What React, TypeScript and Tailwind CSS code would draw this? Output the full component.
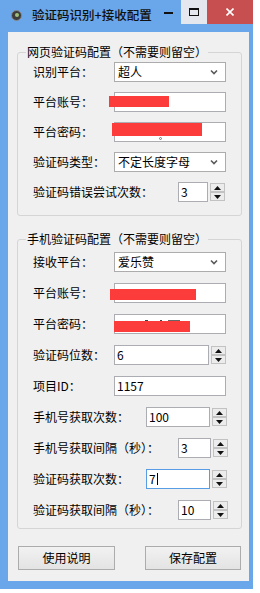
import React from "react";

const FONT = { fontFamily: '"Noto Sans CJK SC", "Noto Sans", sans-serif' };

function Chevron() {
  return (
    <svg width="8" height="6" viewBox="0 0 8 6" className="shrink-0">
      <path d="M1 1.5 L4 4.5 L7 1.5" fill="none" stroke="#5a5a5a" strokeWidth="1.6" />
    </svg>
  );
}

function Select({ value, w = "w-[112px]" }: { value: string; w?: string }) {
  return (
    <div className={`${w} h-[20px] bg-white border border-[#acacac] flex items-center pl-[3px] pr-[7px] justify-between`}>
      <span className="text-[12px] leading-[14px] text-black">{value}</span>
      <Chevron />
    </div>
  );
}

function TextBox({ value, w = "w-[112px]", children, focused }: { value?: string; w?: string; children?: React.ReactNode; focused?: boolean }) {
  return (
    <div className={`${w} h-[20px] relative bg-white border ${focused ? "border-[#569de5]" : "border-[#abadb3]"} flex items-center pl-[2px]`}>
      {value !== undefined && <span className="text-[12px] leading-[14px] text-black">{value}</span>}
      {focused && <span className="w-px h-[12px] bg-black ml-px" />}
      {children}
    </div>
  );
}

function SpinBtn({ up }: { up?: boolean }) {
  return (
    <div className="h-[9px] w-[15px] border border-[#c2c2c2] bg-[#ececec] flex items-center justify-center">
      <svg width="7" height="4" viewBox="0 0 7 4">
        {up ? <path d="M0 4 L3.5 0 L7 4 Z" fill="#111" /> : <path d="M0 0 L3.5 4 L7 0 Z" fill="#111" />}
      </svg>
    </div>
  );
}

function Spinner() {
  return (
    <div className="flex flex-col justify-between h-[20px] ml-[2px] py-px">
      <SpinBtn up />
      <SpinBtn />
    </div>
  );
}

function Row({ label, lw, children, className = "" }: { label: string; lw: string; children: React.ReactNode; className?: string }) {
  return (
    <div className={`flex items-center h-[20px] pl-[15px] ${className}`}>
      <span className={`${lw} shrink-0 text-[12px] leading-[14px] text-black`}>{label}</span>
      {children}
    </div>
  );
}

function Redact({ cls }: { cls: string }) {
  return <div className={`absolute bg-[#fc3b3b] ${cls}`} />;
}

export default function App() {
  return (
    <div className="w-[260px] h-[593px] bg-white" style={FONT}>
      <div className="w-[253px] h-[589px] bg-[#69a6ea] flex flex-col">
        {/* title bar */}
        <div className="h-[32px] flex items-start shrink-0">
          <div className="flex items-center h-[32px] pl-[11px] pb-[2px]">
            <div className="w-[11px] h-[11px] rounded-full bg-[#3d3d3d] border border-[#8a8a8a] flex items-center justify-center">
              <div className="w-[4px] h-[4px] rounded-full bg-[#9fc07a]" />
            </div>
            <span className="ml-[10px] text-[12.5px] leading-[14px] font-medium text-[#111]">验证码识别+接收配置</span>
          </div>
          <div className="flex-1" />
          <div className="flex h-[24px]">
            <div className="w-[25px] h-[24px] flex items-center justify-center pb-[1px]">
              <div className="w-[9px] h-[2px] bg-[#111] mt-[2px]" />
            </div>
            <div className="w-[26px] h-[24px] bg-[#e4e8ee] flex items-center justify-center">
              <div className="w-[10px] h-[8px] border border-[#111] border-t-2" />
            </div>
            <div className="w-[46px] h-[24px] bg-[#c74f4f] flex items-center justify-center">
              <svg width="8" height="8" viewBox="0 0 8 8">
                <path d="M0.5 0.5 L7.5 7.5 M7.5 0.5 L0.5 7.5" stroke="#fff" strokeWidth="1.6" />
              </svg>
            </div>
          </div>
        </div>

        {/* client */}
        <div className="ml-[8px] w-[241px] h-[549px] bg-[#f0f0f0] flex flex-col pt-[13px]">
          {/* group 1 */}
          <fieldset className="ml-[9px] w-[225px] border border-[#d5d5d5] rounded-[3px] pt-[3px] pb-[13px]">
            <legend className="ml-[8px] px-[1px] text-[12px] leading-[14px] text-black">网页验证码配置（不需要则留空）</legend>
            <div className="flex flex-col gap-[10px]">
              <Row label="识别平台：" lw="w-[81px]">
                <Select value="超人" />
              </Row>
              <Row label="平台账号：" lw="w-[81px]">
                <TextBox>
                  <Redact cls="left-[-6px] top-[3px] w-[60px] h-[11px]" />
                </TextBox>
              </Row>
              <Row label="平台密码：" lw="w-[81px]">
                <TextBox>
                  <Redact cls="left-[-3px] top-0 w-[90px] h-[13px]" />
                  <div className="absolute left-[44px] top-[14px] w-[3px] h-[3px] rounded-full border border-[#777]" />
                </TextBox>
              </Row>
              <Row label="验证码类型：" lw="w-[81px]">
                <Select value="不定长度字母" />
              </Row>
              <Row label="验证码错误尝试次数：" lw="w-[145px]">
                <TextBox value="3" w="w-[30px]" />
                <Spinner />
              </Row>
            </div>
          </fieldset>

          {/* group 2 */}
          <fieldset className="ml-[9px] mt-[16px] w-[225px] border border-[#d5d5d5] rounded-[3px] pt-[6px] pb-[8px]">
            <legend className="ml-[8px] px-[1px] text-[12px] leading-[14px] text-black">手机验证码配置（不需要则留空）</legend>
            <div className="flex flex-col gap-[11px]">
              <Row label="接收平台：" lw="w-[81px]">
                <Select value="爱乐赞" />
              </Row>
              <Row label="平台账号：" lw="w-[81px]">
                <TextBox>
                  <Redact cls="left-[-5px] top-[5px] w-[86px] h-[11px]" />
                </TextBox>
              </Row>
              <Row label="平台密码：" lw="w-[81px]">
                <TextBox>
                  <div className="absolute left-[30px] top-[5px] flex gap-[2px]">
                    <div className="w-[3px] h-px bg-[#444]" />
                    <div className="w-[2px] h-px bg-[#444] ml-[10px]" />
                    <div className="w-[12px] h-[2px] bg-[#666] ml-[4px]" />
                  </div>
                  <Redact cls="left-[-1px] top-[6px] w-[76px] h-[11px]" />
                </TextBox>
              </Row>
              <Row label="验证码位数：" lw="w-[81px]">
                <TextBox value="6" w="w-[95px]" />
                <Spinner />
              </Row>
              <Row label="项目ID：" lw="w-[81px]">
                <TextBox value="1157" />
              </Row>
              <Row label="手机号获取次数：" lw="w-[113px]">
                <TextBox value="100" w="w-[64px]" />
                <Spinner />
              </Row>
              <Row label="手机号获取间隔（秒）：" lw="w-[145px]">
                <TextBox value="3" w="w-[33px]" />
                <Spinner />
              </Row>
              <Row label="验证码获取次数：" lw="w-[113px]">
                <TextBox value="7" w="w-[64px]" focused />
                <Spinner />
              </Row>
              <Row label="验证码获取间隔（秒）：" lw="w-[145px]">
                <TextBox value="10" w="w-[33px]" />
                <Spinner />
              </Row>
            </div>
          </fieldset>

          {/* buttons */}
          <div className="flex justify-between ml-[10px] mr-[8px] mt-[17px]">
            <button className="w-[97px] h-[24px] border border-[#acacac] bg-gradient-to-b from-[#f2f2f2] to-[#e3e3e3] text-[12px] leading-[14px] text-black">使用说明</button>
            <button className="w-[96px] h-[24px] border border-[#acacac] bg-gradient-to-b from-[#f2f2f2] to-[#e3e3e3] text-[12px] leading-[14px] text-black">保存配置</button>
          </div>
        </div>
      </div>
    </div>
  );
}
